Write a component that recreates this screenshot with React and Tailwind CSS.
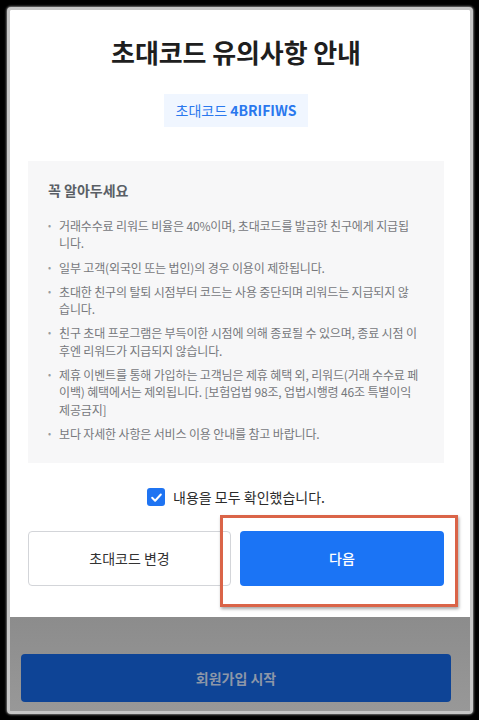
import React from "react";

const items = [
  ["거래수수료 리워드 비율은 40%이며, 초대코드를 발급한 친구에게 지급됩", "니다."],
  ["일부 고객(외국인 또는 법인)의 경우 이용이 제한됩니다."],
  ["초대한 친구의 탈퇴 시점부터 코드는 사용 중단되며 리워드는 지급되지 않", "습니다."],
  ["친구 초대 프로그램은 부득이한 시점에 의해 종료될 수 있으며, 종료 시점 이", "후엔 리워드가 지급되지 않습니다."],
  [
    "제휴 이벤트를 통해 가입하는 고객님은 제휴 혜택 외, 리워드(거래 수수료 페",
    "이백) 혜택에서는 제외됩니다. [보험업법 98조, 업법시행령 46조 특별이익",
    "제공금지]",
  ],
  ["보다 자세한 사항은 서비스 이용 안내를 참고 바랍니다."],
];

export default function App() {
  return (
    <div
      className="relative w-[479px] h-[720px] bg-black pt-[7px] pl-[7px] overflow-hidden"
      style={{ fontFamily: '"Noto Sans CJK KR", "Noto Sans", sans-serif' }}
    >
      <div className="w-[466px] h-[707px] border-[3px] border-[#c6c6c6] rounded-[4px] overflow-hidden flex flex-col bg-[#979797] shadow-[0_0_2px_1px_rgba(180,180,180,0.6)]">
        <div className="h-[607px] bg-white flex flex-col pl-[18px] pt-[24px]">
          <div className="w-[416px] flex flex-col items-center">
            <h1 className="text-[26px] leading-[36px] font-bold text-[#1e1e1e] tracking-[-0.1px]">
              초대코드 유의사항 안내
            </h1>
            <div className="mt-[24px] h-[33px] px-[12px] flex items-center bg-[#f0f6ff] text-[14px] text-[#2a78ee]">
              <span>초대코드&nbsp;</span>
              <span className="font-bold">4BRIFIWS</span>
            </div>
          </div>
          <div className="mt-[34px] w-[416px] bg-[#f7f7f8] pl-[20px] pr-[12px] pt-[18px] pb-[21px]">
            <div className="text-[14px] leading-[22px] font-bold text-[#5a5f66]">꼭 알아두세요</div>
            <ul className="mt-[16px] flex flex-col gap-[7px]">
              {items.map((lines, i) => (
                <li key={i} className="flex text-[12px] leading-[17.3px] text-[#76787c] tracking-[-0.15px]">
                  <span className="w-[11px] shrink-0 text-[9px] text-[#9a9ca0]">•</span>
                  <span className="flex-1 flex flex-col">
                    {lines.map((l, j) => (
                      <span key={j} className="whitespace-nowrap">{l}</span>
                    ))}
                  </span>
                </li>
              ))}
            </ul>
          </div>
          <div className="w-[416px] mt-[24px] flex items-center justify-center gap-[8px]">
            <span className="w-[18px] h-[18px] rounded-[3px] bg-[#1f74f2] flex items-center justify-center">
              <svg width="13" height="13" viewBox="0 0 24 24" fill="none" stroke="white" strokeWidth="3.6" strokeLinecap="round" strokeLinejoin="round">
                <path d="M4 12.5l5.5 5.5L20 6.5" />
              </svg>
            </span>
            <span className="text-[14px] leading-[20px] text-[#2b2b2b]">내용을 모두 확인했습니다.</span>
          </div>
          <div className="w-[416px] mt-[24px] flex gap-[9px]">
            <button className="w-[203px] h-[55px] rounded-[4px] border border-[#d3d5d9] bg-white text-[14px] text-[#333]">
              초대코드 변경
            </button>
            <button className="w-[204px] h-[55px] rounded-[4px] bg-[#1b74f5] text-[14px] font-medium text-white">
              다음
            </button>
          </div>
        </div>
        <div className="flex-1 bg-gradient-to-b from-[#8c8c8c] to-[#989898] pl-[11px] pt-[37px]">
          <div className="w-[430px] h-[48px] rounded-[4px] bg-[#0e4496] flex items-center justify-center text-[14px] font-bold text-[#8d97a8]">
            회원가입 시작
          </div>
        </div>
      </div>
      <div className="absolute left-[220px] top-[515px] w-[238px] h-[92px] border-[3px] border-[#da6448] shadow-[1px_2px_3px_rgba(0,0,0,0.35)]" />
    </div>
  );
}
